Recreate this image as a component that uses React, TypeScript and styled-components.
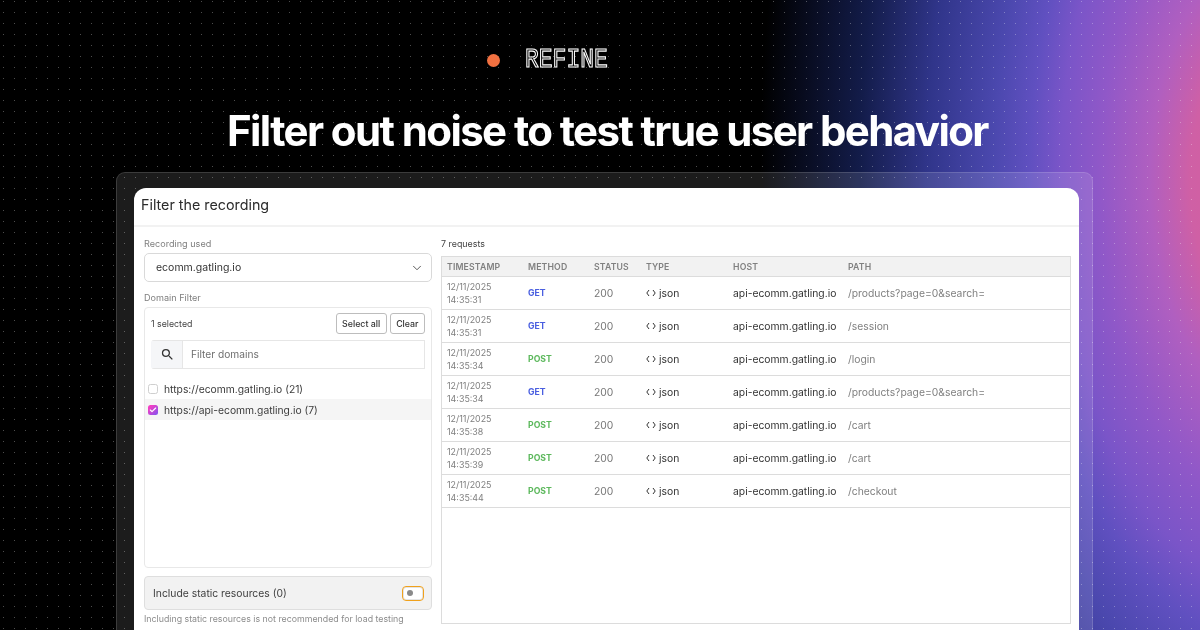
import React from "react";
import styled, { createGlobalStyle } from "styled-components";
import { ChevronDown, Check } from "lucide-react";
import { MdSearch } from "react-icons/md";

const Global = createGlobalStyle`
  html, body { margin: 0; padding: 0; background: #000; }
  * { box-sizing: border-box; }
  body { font-family: Inter, "Liberation Sans", sans-serif; }
`;

const Page = styled.div`
  position: relative;
  width: 1200px;
  height: 630px;
  overflow: hidden;
  display: flex;
  flex-direction: column;
  align-items: center;
  background-color: #000;
  background-image:
    radial-gradient(circle at 3.5px 1.5px, rgba(255, 255, 255, 0.3) 0.6px, transparent 0.8px),
    radial-gradient(500px 1000px at 1260px 180px, #d6609c 0%, #cf60a5 14%, #b05fc0 22%, #9058c8 32%, #7a55c8 40%, #6050c0 46%, #4b48ae 53.4%, #30358a 66.6%, #131c4a 80%, #000 100%);
  background-size: 11px 11px, 100% 100%;
`;

const Brand = styled.div`
  height: 18px;
  margin-top: 51px;
  margin-right: 106px;
  display: flex;
  align-items: center;
  gap: 25px;
`;

const Dot = styled.span`
  width: 13px;
  height: 13px;
  border-radius: 50%;
  background: #f27141;
`;

const Wordmark = styled.span`
  font-family: "Liberation Mono", monospace;
  font-size: 23px;
  line-height: 18px;
  width: 82px;
  color: #000;
  -webkit-text-stroke: 1px #fff;
  transform: scaleY(1.2);
  transform-origin: center;
  will-change: transform;
`;

const Headline = styled.h1`
  margin: 35px 0 0 15px;
  font-size: 42px;
  line-height: 54px;
  font-weight: 700;
  letter-spacing: -1.6px;
  color: #fff;
  white-space: nowrap;
  will-change: transform;
`;

const Frame = styled.div`
  width: 977px;
  flex: 1;
  margin-top: 14px;
  margin-left: 9px;
  padding: 15px 13px 0 17px;
  border: 1px solid rgba(255, 255, 255, 0.14);
  border-bottom: 0;
  border-radius: 9px 9px 0 0;
  background: rgba(255, 255, 255, 0.11);
  min-height: 0;
`;

const Window = styled.div`
  height: 100%;
  background: #fff;
  border-radius: 12px 12px 0 0;
  display: flex;
  flex-direction: column;
  color: #333;
  overflow: hidden;
  filter: blur(0.25px);
`;

const WindowHeader = styled.div`
  height: 39px;
  flex: none;
  padding: 0 7px 5px;
  display: flex;
  align-items: center;
  border-bottom: 2px solid #f2f2f2;
  font-size: 14.3px;
  color: #2b2b2b;
`;

const Body = styled.div`
  flex: 1;
  display: flex;
  padding: 9px 8px 0 10px;
  gap: 9px;
  min-height: 0;
`;

const Side = styled.div`
  width: 288px;
  flex: none;
  display: flex;
  flex-direction: column;
`;

const FieldLabel = styled.div`
  height: 17px;
  font-size: 9.1px;
  line-height: 15px;
  color: #7f7f7f;
`;

const SelectBox = styled.div`
  height: 29px;
  flex: none;
  margin-bottom: 8px;
  border: 1px solid #d9d9d9;
  border-radius: 5px;
  padding: 0 7px 0 11px;
  display: flex;
  align-items: center;
  justify-content: space-between;
  font-size: 10.5px;
  color: #333;
`;

const DomainBox = styled.div`
  height: 261px;
  flex: none;
  margin-bottom: 8px;
  border: 1px solid #e8e8e8;
  border-radius: 4px;
  padding: 5px 0 0;
`;

const SelectBar = styled.div`
  display: flex;
  align-items: center;
  padding: 0 6px;
  gap: 3px;
  height: 21px;
  font-size: 8.8px;
  color: #444;
`;

const Count = styled.span`
  flex: 1;
`;

const SmallButton = styled.button`
  height: 21px;
  padding: 0 5.5px;
  font: inherit;
  font-size: 8.8px;
  font-weight: 500;
  color: #333;
  background: #fff;
  border: 1px solid #bdbdbd;
  border-radius: 3px;
`;

const SearchRow = styled.div`
  margin: 6px 6px 9px;
  height: 29px;
  display: flex;
  border: 1px solid #e6e6e6;
  border-left-color: #f4f5f8;
  border-radius: 3px 0 0 3px;
`;

const SearchAddon = styled.div`
  width: 31px;
  display: flex;
  align-items: center;
  justify-content: center;
  background: #f5f6f8;
  border-right: 1px solid #e6e6e6;
  color: #333;
`;

const SearchText = styled.div`
  flex: 1;
  display: flex;
  align-items: center;
  padding: 0 0 1px 8px;
  font-size: 10.2px;
  color: #6f6f6f;
`;

const DomainRow = styled.div<{ $active?: boolean }>`
  height: 21px;
  display: flex;
  align-items: center;
  gap: 6px;
  padding-left: 3px;
  font-size: 10.3px;
  color: #3c3c3c;
  background: ${(p) => (p.$active ? "#f5f5f5" : "transparent")};
`;

const Box = styled.span<{ $on?: boolean }>`
  width: 10px;
  height: 10px;
  flex: none;
  border-radius: 2.5px;
  display: flex;
  align-items: center;
  justify-content: center;
  color: #fff;
  border: ${(p) => (p.$on ? "0" : "1px solid #cfcfcf")};
  background: ${(p) => (p.$on ? "linear-gradient(135deg, #f23fc4 20%, #7d55f2)" : "#fff")};
`;

const StaticBox = styled.div`
  height: 34px;
  flex: none;
  border: 1px solid #dedede;
  border-radius: 4px;
  background: #f2f2f2;
  padding: 0 7px 0 8px;
  display: flex;
  align-items: center;
  justify-content: space-between;
  font-size: 10.35px;
  color: #404040;
`;

const Toggle = styled.span`
  width: 22px;
  height: 15px;
  border: 1.5px solid #f0a11c;
  border-radius: 4px;
  background: #fff;
  display: flex;
  align-items: center;
  padding-left: 3.5px;
  box-shadow: inset 0 0 0 1px #e4e4e4;
`;

const Knob = styled.span`
  width: 6px;
  height: 6px;
  border-radius: 50%;
  background: #8a8a8a;
`;

const Hint = styled.div`
  margin-top: 2px;
  font-size: 8.8px;
  line-height: 13px;
  color: #8c8c8c;
  white-space: nowrap;
`;

const Main = styled.div`
  flex: 1;
  min-width: 0;
  display: flex;
  flex-direction: column;
`;

const RequestCount = styled.div`
  height: 20px;
  font-size: 8.9px;
  line-height: 15px;
  color: #444;
`;

const Table = styled.div`
  flex: none;
  height: 368px;
  margin-bottom: 6px;
  border: 1px solid #dcdcdc;
`;

const cols = "81px 66px 52px 87px 115px 1fr";

const HeadRow = styled.div`
  height: 20px;
  display: grid;
  grid-template-columns: ${cols};
  align-items: center;
  padding-left: 5px;
  background: #f2f2f2;
  border-bottom: 1px solid #dcdcdc;
  font-size: 8.7px;
  font-weight: 600;
  letter-spacing: 0.15px;
  color: #808080;
`;

const Row = styled.div`
  height: 33px;
  display: grid;
  grid-template-columns: ${cols};
  align-items: center;
  padding-left: 5px;
  border-bottom: 1px solid #dcdcdc;
  font-size: 10.35px;
`;

const Stamp = styled.div`
  font-size: 8.9px;
  line-height: 13px;
  color: #7f7f7f;
`;

const Method = styled.span<{ $post?: boolean }>`
  font-size: 8.7px;
  font-weight: 700;
  color: ${(p) => (p.$post ? "#5cb85c" : "#4a5fe0")};
`;

const Status = styled.span`
  color: #777;
`;

const TypeCell = styled.span`
  display: flex;
  align-items: center;
  gap: 3px;
  color: #333;
`;

const Host = styled.span`
  color: #333;
`;

const PathCell = styled.span`
  color: #808080;
`;

const CodeIcon = () => (
  <svg width="10" height="8" viewBox="0 0 10 8" fill="none" stroke="#333" strokeWidth="1" aria-hidden="true">
    <path d="M3 1 L.8 4 L3 7" />
    <path d="M7 1 L9.2 4 L7 7" />
  </svg>
);

const requests = [
  ["14:35:31", "GET", "/products?page=0&search="],
  ["14:35:31", "GET", "/session"],
  ["14:35:34", "POST", "/login"],
  ["14:35:34", "GET", "/products?page=0&search="],
  ["14:35:38", "POST", "/cart"],
  ["14:35:39", "POST", "/cart"],
  ["14:35:44", "POST", "/checkout"],
];

export default function App() {
  return (
    <Page>
      <Global />
      <Brand>
        <Dot />
        <Wordmark>REFINE</Wordmark>
      </Brand>
      <Headline>Filter out noise to test true user behavior</Headline>
      <Frame>
        <Window>
          <WindowHeader>Filter the recording</WindowHeader>
          <Body>
            <Side>
              <FieldLabel>Recording used</FieldLabel>
              <SelectBox>
                ecomm.gatling.io
                <ChevronDown size={14} strokeWidth={1.5} color="#444" />
              </SelectBox>
              <FieldLabel>Domain Filter</FieldLabel>
              <DomainBox>
                <SelectBar>
                  <Count>1 selected</Count>
                  <SmallButton>Select all</SmallButton>
                  <SmallButton>Clear</SmallButton>
                </SelectBar>
                <SearchRow>
                  <SearchAddon>
                    <MdSearch size={15} />
                  </SearchAddon>
                  <SearchText>Filter domains</SearchText>
                </SearchRow>
                <DomainRow>
                  <Box />
                  https://ecomm.gatling.io (21)
                </DomainRow>
                <DomainRow $active>
                  <Box $on>
                    <Check size={8} strokeWidth={3.5} />
                  </Box>
                  https://api-ecomm.gatling.io (7)
                </DomainRow>
              </DomainBox>
              <StaticBox>
                Include static resources (0)
                <Toggle>
                  <Knob />
                </Toggle>
              </StaticBox>
              <Hint>Including static resources is not recommended for load testing</Hint>
            </Side>
            <Main>
              <RequestCount>7 requests</RequestCount>
              <Table>
                <HeadRow>
                  <span>TIMESTAMP</span>
                  <span>METHOD</span>
                  <span>STATUS</span>
                  <span>TYPE</span>
                  <span>HOST</span>
                  <span>PATH</span>
                </HeadRow>
                {requests.map(([time, method, path], i) => (
                  <Row key={i}>
                    <Stamp>
                      12/11/2025
                      <br />
                      {time}
                    </Stamp>
                    <Method $post={method === "POST"}>{method}</Method>
                    <Status>200</Status>
                    <TypeCell>
                      <CodeIcon />
                      json
                    </TypeCell>
                    <Host>api-ecomm.gatling.io</Host>
                    <PathCell>{path}</PathCell>
                  </Row>
                ))}
              </Table>
            </Main>
          </Body>
        </Window>
      </Frame>
    </Page>
  );
}
